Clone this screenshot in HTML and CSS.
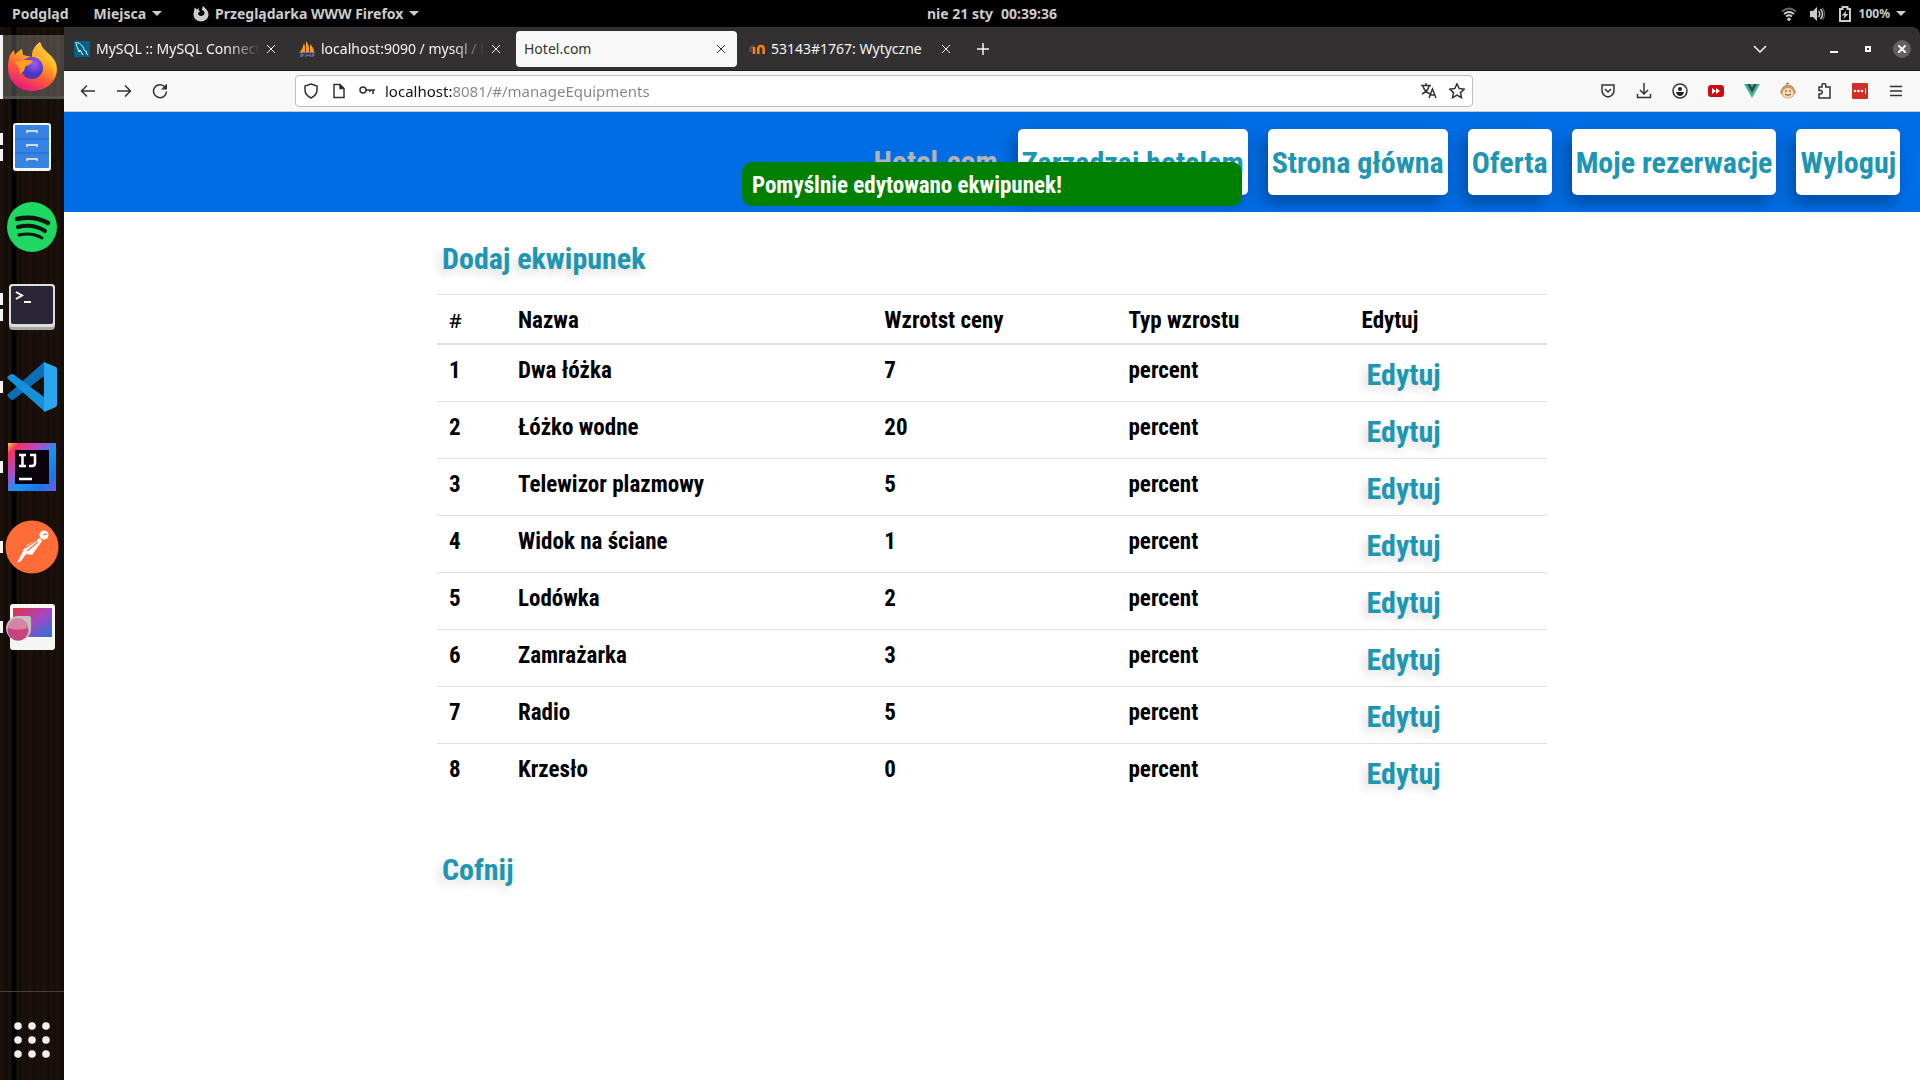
FILE: index.html
```html
<!DOCTYPE html>
<html lang="pl">
<head>
<meta charset="utf-8">
<title>Hotel.com</title>
<link rel="stylesheet" href="styles.css">
</head>
<body>
<div class="desktop">
  <header class="topbar">
    <div class="topbar-left">
      <button class="top-item">Podgląd</button>
      <button class="top-item">Miejsca <span class="caret"></span></button>
      <button class="top-item">
        <svg width="16" height="16" viewBox="0 0 16 16"><path fill="#ccc" fill-rule="evenodd" d="M1.500 1.500l2.500 2 2-1.500-.5 2.500 2 .5-2.500 2c0 2 1.500 3 3 3s3.500-1 3.500-3c0-1.500-1-2.500-2.500-3C9 2.500 9.500 1 10.500 0 10.500 1.500 15.500 3.500 15.500 8.500c0 4-3.500 7-7.500 7s-7.500-3-7.500-7C.5 6 1.500 4.500 1.500 1.500z"/></svg>
        Przeglądarka WWW Firefox <span class="caret"></span></button>
    </div>
    <button class="top-item clock"><span>nie 21 sty</span><span>00:39:36</span></button>
    <button class="top-item status" aria-label="System">
      <svg width="16" height="16" viewBox="0 0 16 16" fill="none" stroke="#ccc" stroke-width="1.800"><path stroke="#666" d="M1 5.500q7-6 14 0"/><path d="M3 8q5-4 10 0M5 10.500q3-2.500 6 0"/><circle cx="8" cy="13.200" r="1.700" fill="#ccc" stroke="none"/></svg>
      <svg width="16" height="16" viewBox="0 0 16 16"><path fill="#ccc" d="M1 5h3l4-4v14l-4-4H1z"/><path d="M9.500 5q2.500 3 0 6M11.500 3q4 5 0 10" fill="none" stroke="#ccc" stroke-width="1.500"/><path d="M13.500 2q4 6 0 12" fill="none" stroke="#666" stroke-width="1.200"/></svg>
      <svg width="16" height="16" viewBox="0 0 16 16"><path fill="none" stroke="#ccc" stroke-width="2" d="M3 3h2.500V1h5v2H13v12H3z"/><path fill="#ccc" d="M9.500 4.500L4.500 9.500h3L6.500 13l5-5h-3z"/></svg>
      <span>100%</span><span class="caret"></span>
    </button>
  </header>

  <nav class="dock" aria-label="Aplikacje">
    <button class="app app-active" aria-label="Firefox"><i class="mark mark-full"></i>
      <svg width="52" height="52" viewBox="0 0 52 52"><defs>
        <linearGradient id="fa" x1=".8" y1="0" x2=".3" y2="1"><stop offset="0" stop-color="#fff44f"/><stop offset=".35" stop-color="#ffb01f"/><stop offset=".65" stop-color="#ff5a36"/><stop offset="1" stop-color="#e31587"/></linearGradient>
        <radialGradient id="fb" cx=".6" cy=".3"><stop offset="0" stop-color="#a15cf5"/><stop offset="1" stop-color="#4c35c0"/></radialGradient>
        <linearGradient id="fc" x1="1" y1="0" x2="0" y2="1"><stop offset="0" stop-color="#ffe14a"/><stop offset="1" stop-color="#ff8a16"/></linearGradient></defs>
        <path fill="url(#fa)" d="M3 19c1-5 3-7 5-9l1 5c2-3 4-4 7-6l1 6 9 2c0-8 4-12 8-15l4 9c9 5 13 11 13 18 0 13-11 22-25 22S2 41 2 28c0-3 0-6 1-9z"/>
        <path fill="url(#fc)" d="M26 17c0-8 4-12 8-15 1 5 4 7 8 11 8 7 10 16 6 24-2-2 1-6-2-12-2-5-9-7-20-8z"/>
        <circle cx="26" cy="28" r="11" fill="url(#fb)"/>
        <path fill="#ff9d24" d="M9 23c4-3 13-4 18-2-2 4-6 4-8 6 0 4-3 6-5 6 0-4-1-7-5-10z"/></svg></button>
    <button class="app" aria-label="Pliki"><i class="mark mark-two"></i>
      <svg width="40" height="50" viewBox="0 0 40 50"><rect x="1" y="1" width="38" height="48" rx="3" fill="#f4f4f4"/><rect x="3" y="3" width="34" height="43" rx="1" fill="#3584e4"/><path d="M3 17h34M3 31h34" stroke="#2567c0"/><path d="M15 11V9h10v2M15 25v-2h10v2M15 39v-2h10v2" fill="none" stroke="#d5d5d5" stroke-width="2"/></svg></button>
    <button class="app" aria-label="Spotify">
      <svg width="50" height="50" viewBox="0 0 50 50"><circle cx="25" cy="25" r="25" fill="#1fd862"/><path fill="none" stroke="#101510" stroke-linecap="round" stroke-width="4.500" d="M10 17q17-4 31 4"/><path fill="none" stroke="#101510" stroke-linecap="round" stroke-width="4" d="M11 25q15-4 27 4"/><path fill="none" stroke="#101510" stroke-linecap="round" stroke-width="3" d="M12 33q13-3 23 3"/></svg></button>
    <button class="app" aria-label="Terminal"><i class="mark mark-two"></i>
      <svg width="46" height="46" viewBox="0 0 46 46"><rect width="46" height="46" rx="4" fill="#a9a6a2"/><rect width="46" height="43" rx="4" fill="#e0deda"/><rect x="2" y="2" width="42" height="38" rx="2" fill="#2b2538"/><path d="M7 8l6 3.500L7 15M15 18h7" fill="none" stroke="#fff" stroke-width="2"/></svg></button>
    <button class="app" aria-label="Visual Studio Code"><i class="mark"></i>
      <svg width="50" height="50" viewBox="0 0 50 50"><path fill="#0b6fb8" d="M37 0v14L6 38q-3 0-6-5z"/><path fill="#158fd8" d="M37 49V35L6 12q-4 0-6 4z"/><path fill="#2aa5f0" d="M37 0l12 5q1 1 1 3v34q0 2-1 3l-12 5z"/></svg></button>
    <button class="app" aria-label="IntelliJ IDEA"><i class="mark"></i>
      <svg width="48" height="48" viewBox="0 0 48 48"><defs><linearGradient id="ij" x1="0" y1="0" x2="1" y2="1"><stop offset="0" stop-color="#ffd23a"/><stop offset=".12" stop-color="#f52f63"/><stop offset=".35" stop-color="#b44acb"/><stop offset=".55" stop-color="#1695f5"/><stop offset=".8" stop-color="#1976ed"/><stop offset="1" stop-color="#7856e6"/></linearGradient></defs><rect width="48" height="48" fill="url(#ij)"/><rect x="7" y="7" width="34" height="34" fill="#0b030b"/><path fill="none" stroke="#fff" stroke-width="2.500" d="M11 12h7M14.500 12v11M11 23h7M22 12h5v8q0 3-3 3h-3M11 36h13"/></svg></button>
    <button class="app" aria-label="Postman"><i class="mark"></i>
      <svg width="54" height="54" viewBox="0 0 54 54"><circle cx="27" cy="27" r="26.500" fill="#ff6c37"/><g fill="#fff"><circle cx="39" cy="15" r="4.500"/><path d="M35 18l2 3-10 14-6-1-5 7-4 2 7-14 3-4z"/></g><path d="M20 28l12-8M22 31l11-9M38 15l4-1" stroke="#ff6c37" stroke-width="1.200"/></svg></button>
    <button class="app" aria-label="Zrzut ekranu"><i class="mark"></i>
      <svg width="54" height="46" viewBox="0 0 54 46"><defs><linearGradient id="sc" x1="0" y1="0" x2="1" y2="1"><stop offset="0" stop-color="#e0303f"/><stop offset=".5" stop-color="#a848c0"/><stop offset="1" stop-color="#1f74dc"/></linearGradient></defs><rect x="5" width="45" height="46" rx="3" fill="#f6f5f4"/><rect x="8" y="4" width="39" height="29" fill="url(#sc)"/><path fill="#c4c1bd" d="M13 12h11q2 0 2 2v12a12.500 12.500 0 1 1-13-14z"/><circle cx="13" cy="26" r="10.500" fill="#c7457f"/><path fill="#d983a4" d="M3 24a10 10 0 0 1 20 0q-10 3-20 0z"/></svg></button>
    <button class="app all-apps" aria-label="Pokaż programy">
      <svg width="36" height="36" viewBox="0 0 36 36" fill="#f2f1f0"><circle cx="4" cy="4" r="3.800"/><circle cx="18" cy="4" r="3.800"/><circle cx="32" cy="4" r="3.800"/><circle cx="4" cy="18" r="3.800"/><circle cx="18" cy="18" r="3.800"/><circle cx="32" cy="18" r="3.800"/><circle cx="4" cy="32" r="3.800"/><circle cx="18" cy="32" r="3.800"/><circle cx="32" cy="32" r="3.800"/></svg></button>
  </nav>

  <section class="browser">
    <div class="tabstrip">
      <div class="tab">
        <svg width="16" height="16" viewBox="0 0 16 16"><rect width="16" height="16" fill="#00618a"/><path d="M1 2c3-1 6 1 8 4 1 2 1 4 4 5l-1 1 2 2M2 3c1 2 1 3 2 5l1 3 1-2 3 5" fill="none" stroke="#fff"/></svg>
        <span class="tab-title tab-title-long">MySQL :: MySQL Connector</span><button class="tab-close" aria-label="Zamknij kartę"><svg width="10" height="10" viewBox="0 0 10 10"><path d="M1 1l8 8M9 1L1 9"/></svg></button>
      </div>
      <div class="tab">
        <svg width="16" height="16" viewBox="0 0 16 16"><path fill="#f89c1c" d="M1 11Q4 7 5 2q2 4 1 9zM7 11V0q4 5 3 11zM11 11V3q4 4 4 8z"/><path d="M0 11.500h16M2 16v-3h2v2H2M7 16v-3l2 2 2-2v3M13 16v-3h2v2h-2" fill="none" stroke="#6c78af"/></svg>
        <span class="tab-title tab-title-long">localhost:9090 / mysql / hotel</span><button class="tab-close" aria-label="Zamknij kartę"><svg width="10" height="10" viewBox="0 0 10 10"><path d="M1 1l8 8M9 1L1 9"/></svg></button>
      </div>
      <div class="tab tab-current">
        <span class="tab-title">Hotel.com</span><button class="tab-close" aria-label="Zamknij kartę"><svg width="10" height="10" viewBox="0 0 10 10"><path d="M1 1l8 8M9 1L1 9"/></svg></button>
      </div>
      <div class="tab">
        <svg width="16" height="16" viewBox="0 0 16 16" fill="none" stroke-width="2.600"><path stroke="#6b4a35" d="M1 7l4-2M1.500 7v4"/><path stroke="#f98012" d="M5 13V6M9.300 13V7.500Q9.500 5 12 5t2.600 2.500V13"/></svg>
        <span class="tab-title">53143#1767: Wytyczne</span><button class="tab-close" aria-label="Zamknij kartę"><svg width="10" height="10" viewBox="0 0 10 10"><path d="M1 1l8 8M9 1L1 9"/></svg></button>
      </div>
      <button class="new-tab" aria-label="Nowa karta"><svg width="12" height="12" viewBox="0 0 12 12"><path stroke-width="1.500" d="M6 0v12M0 6h12"/></svg></button>
      <div class="window-controls">
        <button class="list-tabs" aria-label="Lista kart"><svg width="14" height="8" viewBox="0 0 14 8"><path d="M1 1l6 6 6-6" stroke-width="1.500"/></svg></button>
        <button aria-label="Minimalizuj"><svg width="8" height="8" viewBox="0 0 8 8"><path d="M0 7h8" stroke-width="2"/></svg></button>
        <button aria-label="Maksymalizuj"><svg width="6" height="6" viewBox="0 0 6 6"><path d="M1 1h4v4H1z" stroke-width="2"/></svg></button>
        <button class="window-close" aria-label="Zamknij"><svg width="8" height="8" viewBox="0 0 8 8"><path d="M0 0l8 8M8 0L0 8" stroke-width="2"/></svg></button>
      </div>
    </div>

    <div class="toolbar">
      <div class="toolbar-nav">
        <button aria-label="Wstecz"><svg width="16" height="16" viewBox="0 0 16 16"><path d="M15 8H1.500M7 2.500L1.500 8 7 13.500"/></svg></button>
        <button aria-label="Dalej"><svg width="16" height="16" viewBox="0 0 16 16"><path d="M1 8h13.500M9 2.500L14.500 8 9 13.500"/></svg></button>
        <button aria-label="Odśwież"><svg width="16" height="16" viewBox="0 0 16 16"><path d="M13 4A6.500 6.500 0 1 0 14.500 8.500"/><path fill="#333" stroke="none" d="M15 .5V6.500H9z"/></svg></button>
      </div>
      <label class="urlbar">
        <svg width="16" height="16" viewBox="0 0 16 16"><path d="M8 1l6 2v4q0 5-6 8-6-3-6-8V3z"/></svg>
        <svg width="16" height="16" viewBox="0 0 16 16"><path d="M3 1.500h6l4 4v9H3z"/><path d="M9 1.500v4h4" fill="#222"/></svg>
        <svg width="16" height="16" viewBox="0 0 16 16"><circle cx="4" cy="7" r="3"/><path d="M7 7h9M14 7v4M11 7v2"/></svg>
        <input class="url" type="text" aria-label="Adres" value="localhost:8081/#/manageEquipments">
        <svg width="16" height="16" viewBox="0 0 16 16"><path d="M0 2.500h10M5 0v2M2 3q1 5 7 8M8 3q-1 5-7 8M8 15l3.500-9L15 15M9.500 12h4.500"/></svg>
        <svg width="16" height="16" viewBox="0 0 16 16"><path d="M8 .8l2.200 4.700 5.100.6-3.800 3.500 1 5.100L8 12.200l-4.500 2.500 1-5.100L.7 6.100l5.100-.6z"/></svg>
      </label>
      <div class="toolbar-tools">
        <button aria-label="Pocket"><svg width="16" height="16" viewBox="0 0 16 16"><path d="M2 2h12v5q0 6-6 7-6-1-6-7z"/><path d="M5 6l3 3 3-3"/></svg></button>
        <button aria-label="Pobrane"><svg width="16" height="16" viewBox="0 0 16 16"><path d="M8 0v11M4 7l4 4 4-4M1.500 11v3.500h13V11"/></svg></button>
        <button aria-label="Konto"><svg width="16" height="16" viewBox="0 0 16 16"><circle cx="8" cy="8" r="7"/><circle cx="8" cy="6" r="2" fill="#222" stroke="none"/><path fill="#222" stroke="none" d="M4 9h8q-1 4-4 4T4 9z"/></svg></button>
        <button aria-label="Pomijanie reklam"><svg width="16" height="16" viewBox="0 0 16 16"><rect y="2" width="16" height="12" rx="3" fill="#cf0a12" stroke="none"/><path fill="#fff" stroke="none" d="M4 5l4 3-4 3zM8 5l4 3-4 3z"/></svg></button>
        <button aria-label="Vue"><svg width="16" height="16" viewBox="0 0 16 16"><path fill="#41b883" stroke="none" d="M0 1h16L8 15z"/><path fill="#35495e" stroke="none" d="M3 1h3l2 3.500L10 1h3L8 10z"/></svg></button>
        <button aria-label="Tampermonkey"><svg width="16" height="16" viewBox="0 0 16 16"><g fill="#c49a6c" stroke="none"><circle cx="2" cy="9" r="2"/><circle cx="14" cy="9" r="2"/><circle cx="8" cy="8.500" r="7"/></g><ellipse cx="8" cy="10" rx="5.500" ry="5" fill="#f5d9b0" stroke="none"/><path stroke="#6d4c2f" stroke-width="1" d="M6 7v2M10 7v2M5 11q3 3 6 0M6 1l3-1"/></svg></button>
        <button aria-label="Rozszerzenia"><svg width="16" height="16" viewBox="0 0 16 16"><path d="M3 4h3V2.500a1.900 1.900 0 0 1 3.800 0V4H14v11H3v-4h1.500a1.700 1.700 0 0 0 0-3.500H3z"/></svg></button>
        <button aria-label="Menedżer haseł"><svg width="16" height="16" viewBox="0 0 16 16"><rect width="16" height="16" rx="1" fill="#d32d27" stroke="none"/><g fill="#fff" stroke="none"><circle cx="3" cy="8" r="1.300"/><circle cx="6.500" cy="8" r="1.300"/><circle cx="10" cy="8" r="1.300"/><path d="M13 5h1v6h-1z"/></g></svg></button>
        <button aria-label="Menu"><svg width="16" height="16" viewBox="0 0 16 16"><path d="M2 3.500h12M2 8h12M2 12.500h12"/></svg></button>
      </div>
    </div>

    <div class="page">
      <nav class="site-nav">
        <a class="brand" href="#/">Hotel.com</a>
        <a class="nav-link" href="#/manageHotel">Zarządzaj hotelem</a>
        <a class="nav-link" href="#/home">Strona główna</a>
        <a class="nav-link" href="#/offer">Oferta</a>
        <a class="nav-link" href="#/reservations">Moje rezerwacje</a>
        <a class="nav-link" href="#/logout">Wyloguj</a>
      </nav>
      <div class="toast" role="status">Pomyślnie edytowano ekwipunek!</div>
      <main class="container">
        <button class="action">Dodaj ekwipunek</button>
        <table class="equipment">
          <colgroup><col class="col-id"><col class="col-name"><col class="col-price"><col class="col-type"><col></colgroup>
          <thead><tr><th scope="col" class="hash">#</th><th scope="col">Nazwa</th><th scope="col">Wzrotst ceny</th><th scope="col">Typ wzrostu</th><th scope="col">Edytuj</th></tr></thead>
          <tbody>
            <tr><th scope="row">1</th><td>Dwa łóżka</td><td>7</td><td>percent</td><td><button class="action">Edytuj</button></td></tr>
            <tr><th scope="row">2</th><td>Łóżko wodne</td><td>20</td><td>percent</td><td><button class="action">Edytuj</button></td></tr>
            <tr><th scope="row">3</th><td>Telewizor plazmowy</td><td>5</td><td>percent</td><td><button class="action">Edytuj</button></td></tr>
            <tr><th scope="row">4</th><td>Widok na ściane</td><td>1</td><td>percent</td><td><button class="action">Edytuj</button></td></tr>
            <tr><th scope="row">5</th><td>Lodówka</td><td>2</td><td>percent</td><td><button class="action">Edytuj</button></td></tr>
            <tr><th scope="row">6</th><td>Zamrażarka</td><td>3</td><td>percent</td><td><button class="action">Edytuj</button></td></tr>
            <tr><th scope="row">7</th><td>Radio</td><td>5</td><td>percent</td><td><button class="action">Edytuj</button></td></tr>
            <tr><th scope="row">8</th><td>Krzesło</td><td>0</td><td>percent</td><td><button class="action">Edytuj</button></td></tr>
          </tbody>
        </table>
        <button class="action">Cofnij</button>
      </main>
    </div>
  </section>
</div>
</body>
</html>
```
FILE: styles.css
```css
* { box-sizing: border-box; }
body { margin: 0; font-family: "Noto Sans", "Open Sans", sans-serif; font-size: 14px; }
button { border: 0; padding: 0; background: none; font: inherit; color: inherit; }
svg { display: block; flex: none; }

.desktop { display: grid; grid-template: 27px 1fr / 64px 1fr; min-height: 100vh; background: #000; }

/* GNOME top bar: the clock is centred over the work area beside the dock */
.topbar { grid-column: 1 / -1; display: grid; grid-template-columns: 1fr auto 1fr; align-items: center; padding: 0 14px 0 78px; color: #ccc; font-size: 14px; line-height: 20px; font-weight: 700; }
.topbar-left { display: flex; gap: 25px; margin-left: -66px; }
.top-item { display: flex; align-items: center; gap: 6px; white-space: nowrap; }
.top-item:nth-child(3) { padding-left: 6px; }
.clock { gap: 8px; }
.status { justify-self: end; gap: 12px; font-size: 12px; }
.status .caret { margin-left: -6px; }
.status span:not(.caret) { margin-left: -6px; }
.caret { border: 5px solid transparent; border-top-color: #ccc; border-bottom: 0; }

/* Launcher */
.dock { display: flex; flex-direction: column; gap: 16px; padding-top: 8px; background: linear-gradient(90deg, transparent 11px, #000 12px 16px, transparent 17px), repeating-linear-gradient(90deg, #1c120b 0 3px, #120b07 6px, #1a110a 9px, #140d08 14px); }
.app { position: relative; display: grid; place-items: center; height: 64px; }
.app-active { background: rgba(255, 255, 255, .22); border-bottom: 3px solid #56514c; }
.mark { position: absolute; left: 0; top: 26px; width: 3px; height: 12px; background: #f4f3f1; }
.mark-full { top: 0; height: 64px; }
.mark-two { top: 18px; height: 28px; background: linear-gradient(#f4f3f1 12px, transparent 12px 16px, #f4f3f1 16px); }
.all-apps { margin-top: auto; height: 89px; padding-top: 8px; border-top: 1px solid #46403a; }

/* Browser chrome */
.browser { display: flex; flex-direction: column; min-width: 0; }
.tabstrip { display: flex; align-items: center; gap: 4px; height: 44px; padding: 0 9px 0 2px; background: #323031; color: #f5f5f5; border-bottom: 1px solid #1f1e1f; border-radius: 0 8px 0 0; }
.tabstrip svg { fill: none; }
.tab { display: flex; align-items: center; gap: 6px; width: 221px; height: 36px; padding: 0 11px 0 8px; border-radius: 4px; }
.tab-title { flex: 1; min-width: 0; overflow: hidden; white-space: nowrap; }
.tab-title-long { mask-image: linear-gradient(90deg, #000 calc(100% - 32px), transparent); }
.tab-current { background: #f8f8f8; color: #333; }
.tab-close svg, .new-tab svg, .window-controls svg { stroke: currentColor; }
.new-tab { margin-left: 11px; }
.window-controls { display: flex; align-items: center; gap: 16px; margin-left: auto; }
.window-controls button { display: grid; place-items: center; width: 18px; height: 18px; }
.window-controls .list-tabs { margin-right: 40px; }
.window-controls .window-close { border-radius: 9px; background: #626061; }

.toolbar { display: flex; align-items: center; height: 41px; padding: 0 16px; background: #f8f8f8; border-bottom: 1px solid #c8c8c8; }
.toolbar svg { fill: none; stroke: #333; stroke-width: 1.5px; }
.toolbar-nav { display: flex; gap: 20px; width: 215px; }
.toolbar-tools { display: flex; gap: 20px; margin-left: 127px; }
.urlbar { display: flex; flex: 1; align-items: center; gap: 12px; height: 32px; padding: 0 7px; border: 1px solid #bdbdbd; border-radius: 4px; background: #fff; }
.url { flex: 1; min-width: 0; margin-left: -2px; padding: 0; border: 0; outline: 0; font: inherit; font-size: 15px; color: transparent; background: linear-gradient(90deg, #111 68px, #858585 68px) text; }

/* Hotel.com */
.page { position: relative; flex: 1; background: #fff; color: #000; font: 700 23px/24px "Roboto Condensed", "Open Sans Condensed", sans-serif; }
.site-nav { display: flex; align-items: center; justify-content: flex-end; gap: 20px; height: 100px; padding: 0 20px; background: #006de5; font-size: 30px; }
.site-nav a { text-decoration: none; white-space: nowrap; }
.brand { color: #b3b3b3; }
.nav-link { padding: 22px 4px 20px; border-radius: 5px; background: #fff; color: #1d96b2; box-shadow: -5px 8px 16px rgba(0, 0, 0, .3); }
.toast { position: absolute; top: 50px; left: 50%; width: 500px; padding: 12px 10px 8px; border-radius: 10px; transform: translateX(-50%); background: #008000; color: #fff; }
.container { display: flex; flex-direction: column; align-items: flex-start; max-width: 1140px; margin: 0 auto; padding: 31px 15px; }
.action { display: block; height: 32px; padding: 0 5px; color: #1d96b2; font-size: 30px; line-height: 32px; text-shadow: -4px 5px 10px rgba(0, 0, 0, .14); }
.equipment { width: 100%; margin: 19px 0 54px; table-layout: fixed; border-spacing: 0; text-align: left; }
.col-id { width: 69px; }
.col-name { width: 33%; }
.col-price { width: 22%; }
.col-type { width: 21%; }
.equipment th, .equipment td { padding: 14px 12px 10px; border-top: 1px solid #dee2e6; vertical-align: top; }
.equipment thead th { border-bottom: 2px solid #dee2e6; }
.equipment tbody tr:first-child > * { border-top: 0; }
.equipment .hash { font-family: "Noto Sans", sans-serif; font-size: 20px; font-weight: 500; }
```
